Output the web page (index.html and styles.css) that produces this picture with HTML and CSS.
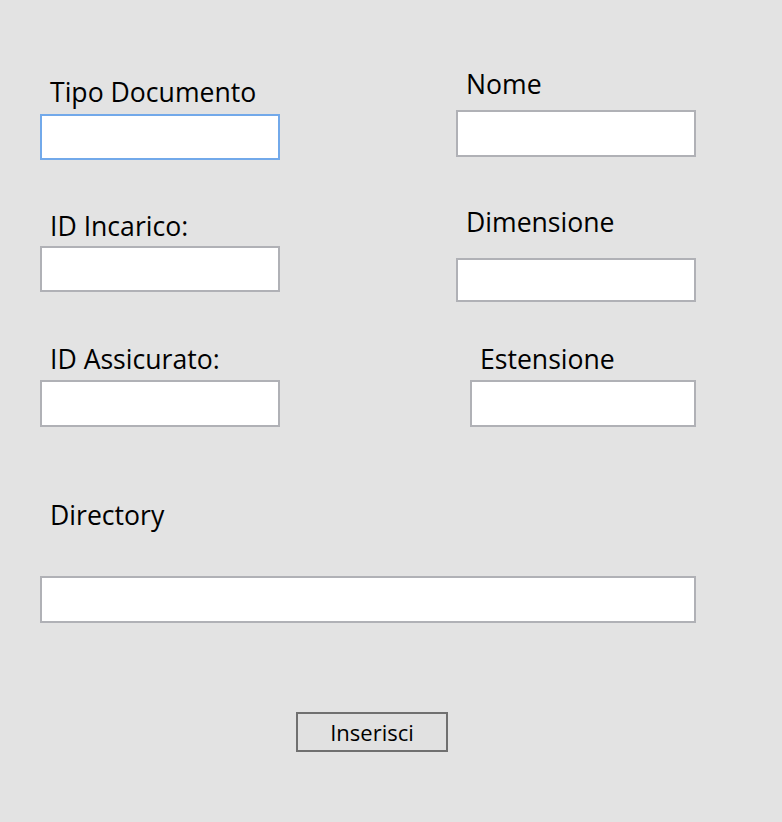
FILE: index.html
```html
<!DOCTYPE html>
<html lang="it">
<head>
<meta charset="utf-8">
<title>Inserisci documento</title>
<link rel="stylesheet" href="styles.css">
</head>
<body>
<main class="form">
  <div class="row row1">
    <div class="field f-tipo">
      <label class="lbl gap-10">Tipo Documento</label>
      <input class="box box-focus" type="text">
    </div>
    <div class="field f-nome">
      <label class="lbl gap-14">Nome</label>
      <input class="box h47" type="text">
    </div>
  </div>
  <div class="row row2">
    <div class="field f-incarico">
      <label class="lbl gap-8">ID Incarico:</label>
      <input class="box h46" type="text">
    </div>
    <div class="field f-dim">
      <label class="lbl gap-24">Dimensione</label>
      <input class="box h44" type="text">
    </div>
  </div>
  <div class="row row3">
    <div class="field">
      <label class="lbl gap-9">ID Assicurato:</label>
      <input class="box h47" type="text">
    </div>
    <div class="field f-est">
      <label class="lbl gap-9">Estensione</label>
      <input class="box h47 narrow" type="text">
    </div>
  </div>
  <div class="field f-dir">
    <label class="lbl gap-49">Directory</label>
    <input class="box h47 wide" type="text">
  </div>
  <button class="btn" type="button">Inserisci</button>
</main>
</body>
</html>
```
FILE: styles.css
```css
html, body {
  margin: 0;
  padding: 0;
  background: #e3e3e3;
}
body {
  width: 782px;
  height: 822px;
  overflow: hidden;
  font-family: "Open Sans", "Noto Sans", "Liberation Sans", sans-serif;
  color: #000;
}
.form {
  display: flex;
  flex-direction: column;
  align-items: flex-start;
  padding: 66px 0 0 40px;
}
.row {
  display: flex;
  align-items: flex-start;
}
.row2 { margin-top: 44px; }
.row3 { margin-top: 39px; }
.field {
  display: flex;
  flex-direction: column;
  align-items: flex-start;
}
.lbl {
  display: block;
  font-size: 26.6px;
  line-height: 36px;
  padding-left: 10px;
  white-space: nowrap;
}
.gap-8 { margin-bottom: 2px; }
.gap-9 { margin-bottom: 3px; }
.gap-10 { margin-bottom: 4px; }
.gap-14 { margin-bottom: 8px; }
.gap-24 { margin-bottom: 18px; }
.gap-49 { margin-bottom: 43px; }

.f-tipo { margin-top: 8px; }
.f-nome { margin-left: 176px; }
.f-incarico { margin-top: 4px; }
.f-dim { margin-left: 176px; }
.f-est { margin-left: 190px; }
.f-dir { margin-top: 70px; }

.box {
  box-sizing: border-box;
  width: 240px;
  height: 46px;
  margin: 0;
  padding: 0;
  background: #fff;
  border: 2px solid #b0b1b6;
  outline: none;
  font: inherit;
}
.box-focus { border-color: #72a9ea; }
.h44 { height: 44px; }
.h46 { height: 46px; }
.h47 { height: 47px; }
.narrow { width: 226px; }
.wide { width: 656px; }

.btn {
  box-sizing: border-box;
  margin: 89px 0 0 256px;
  width: 152px;
  height: 40px;
  padding: 0;
  background: #e1e1e1;
  border: 2px solid #707070;
  font-family: "Open Sans", "Noto Sans", "Liberation Sans", sans-serif;
  font-size: 22px;
  line-height: 34px;
  color: #000;
}
```
